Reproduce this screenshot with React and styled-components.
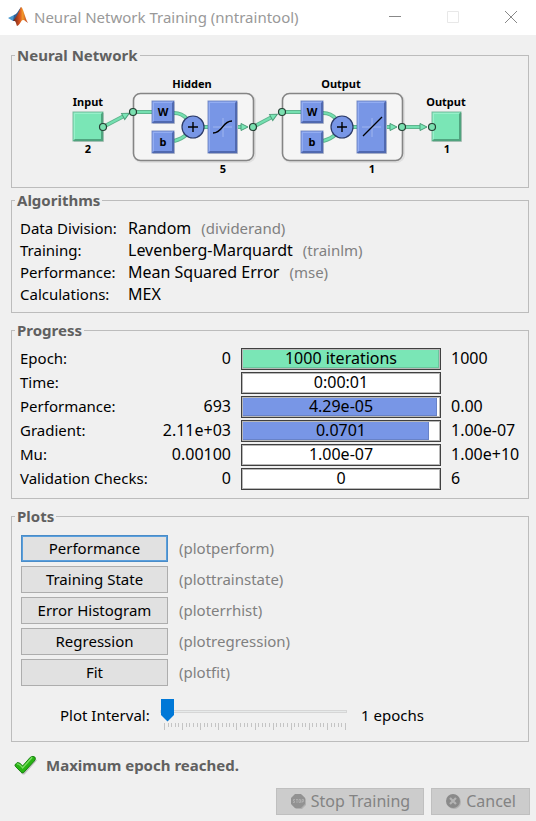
import React, { useState } from "react";
import styled, { createGlobalStyle, css } from "styled-components";

const GlobalStyle = createGlobalStyle`
  *, *::before, *::after { box-sizing: border-box; }
  html { background: #f0f0f0; }
  body {
    margin: 0;
    background: #f0f0f0;
    color: #000;
    font-family: "Noto Sans", "Open Sans", sans-serif;
    font-size: 15px;
    line-height: 22px;
  }
  button, input { font: inherit; }
`;

const Window = styled.div`
  display: flex;
  flex-direction: column;
  min-height: 100vh;
`;

const TitleBar = styled.header`
  display: flex;
  align-items: center;
  gap: 12px;
  height: 35px;
  padding: 0 2px 2px 8px;
  background: #fff;
  color: #999;
`;

const Title = styled.h1`
  display: flex;
  align-items: center;
  flex: 1;
  gap: 5px;
  margin: 0;
  font-size: 15px;
  font-weight: 400;
  line-height: 22px;
  white-space: nowrap;
`;

const CaptionButton = styled.button`
  display: grid;
  place-items: center;
  width: 46px;
  height: 33px;
  padding: 0;
  border: 0;
  background: transparent;
  color: #888;
  &:disabled { color: #e8e8e8; }
`;

const Main = styled.main`
  display: flex;
  flex-direction: column;
  padding: 9px 7px 0 11px;
`;

const Panel = styled.fieldset`
  min-width: 0;
  margin: 0 0 ${(p) => p.$gap || 0}px;
  padding: 0;
  border: 1px solid #bcbcbc;
`;

const Legend = styled.legend`
  margin-left: 3px;
  padding: 0 2px;
  color: #606060;
  font-weight: 700;
`;

const Diagram = styled.svg`
  display: block;
  margin: 0 auto;
  font-weight: 700;
  font-size: 11px;
  text-anchor: middle;
`;

const Facts = styled.dl`
  display: grid;
  grid-template-columns: 108px 1fr;
  margin: 0;
  padding: 6px 8px 7px;
`;

const Term = styled.dt`
  white-space: nowrap;
`;

const Value = styled.dd`
  display: flex;
  gap: 10px;
  margin: 0;
`;

const ValueText = styled.span`
  font-size: 16px;
`;

const Hint = styled.span`
  color: #808080;
`;

const ProgressList = styled.div`
  display: flex;
  flex-direction: column;
  gap: 2px;
  padding: 7px 8px 8px;
`;

const ProgressRow = styled.div`
  display: grid;
  grid-template-columns: 133px 78px minmax(120px, 200px) 1fr;
  column-gap: 0;
  height: 22px;
  line-height: 21px;
`;

const Start = styled.span`
  font-size: 16px;
  text-align: right;
`;

const Goal = styled.span`
  padding-left: 20px;
  font-size: 16px;
  white-space: nowrap;
`;

const Bar = styled.div`
  display: grid;
  height: 22px;
  margin-left: 10px;
  margin-right: -10px;
  border: 1px solid #404040;
  background: #fff;
  box-shadow: inset 0 0 0 1px #b8b8b8;
  > * { grid-area: 1 / 1; }
`;

const Fill = styled.div`
  margin: 1px;
  border: solid #0002;
  border-width: 0 1px 1px 0;
  background: ${(p) => (p.$tone === "green" ? "#7ae6b6" : "#7896e6")};
`;

const BarText = styled.span`
  font-size: 16px;
  line-height: 19px;
  text-align: center;
`;

const PlotList = styled.div`
  display: flex;
  flex-direction: column;
  gap: 4px;
  padding: 8px 9px 12px;
`;

const PlotRow = styled.div`
  display: flex;
  gap: 11px;
  height: 27px;
  line-height: 26px;
`;

const Button = styled.button`
  display: flex;
  align-items: center;
  justify-content: center;
  height: 27px;
  padding: 0 13px 1px;
  border: 1px solid #adadad;
  background: #e1e1e1;
  color: #000;
  line-height: 22px;
  white-space: nowrap;
  ${(p) => p.$wide && css`width: 147px; padding: 0 0 1px;`}
  ${(p) => p.$focused && css`border-color: #4a8cc8; box-shadow: inset 0 0 0 1px #5a9fdc;`}
  &:disabled {
    gap: 4px;
    border-color: #bfbfbf;
    background: #ccc;
    color: #838383;
    font-size: 16px;
  }
`;

const IntervalRow = styled.div`
  display: flex;
  align-items: flex-start;
  padding: 0 8px 11px 48px;
`;

const IntervalText = styled.label`
  width: ${(p) => p.$width}px;
  padding-top: 6px;
  white-space: nowrap;
`;

const SliderBox = styled.div`
  display: flex;
  flex-direction: column;
  width: 187px;
  margin: 1px 14px 0 0;
`;

const Slider = styled.input`
  width: 187px;
  height: 24px;
  margin: 0;
  appearance: none;
  background: transparent;
  outline: none;
  &::-webkit-slider-runnable-track {
    height: 3px;
    border: 1px solid #d6d6d6;
    background: #e7eaea;
  }
  &::-webkit-slider-thumb {
    appearance: none;
    width: 13px;
    height: 23px;
    margin-top: -12px;
    background: #0078d7;
    clip-path: polygon(0 0, 100% 0, 100% 72%, 50% 100%, 0 72%);
  }
`;

const Ticks = styled.svg`
  display: block;
`;

const Status = styled.p`
  display: flex;
  align-items: center;
  gap: 9px;
  margin: 0;
  padding: 12px 0 0 2px;
  color: #606060;
  font-weight: 700;
`;

const Actions = styled.footer`
  display: flex;
  justify-content: flex-end;
  gap: 7px;
  padding: 12px 6px 6px;
`;

function MatlabIcon() {
  return (
    <svg width="21" height="21" viewBox="0 0 21 21" aria-hidden="true">
      <defs>
        <linearGradient id="flame" x1="0" x2="1">
          <stop offset="0" stopColor="#5b1f1c" />
          <stop offset=".45" stopColor="#d9531e" />
          <stop offset=".65" stopColor="#f39a2b" />
          <stop offset="1" stopColor="#b3341f" />
        </linearGradient>
      </defs>
      <path d="M0 12 6 9 9 12 5 15Z" fill="#4a9ad0" />
      <path d="M6 9C9 8 10 5 13 1L12 9 8 15 5 15Z" fill="#2f5f94" />
      <path d="M13 1C11 5 10 9 5 15C8 14 8 18 9 20C12 19 13 14 15 14C17 14 18 16 20 17C17 12 15 1 13 1Z" fill="url(#flame)" />
    </svg>
  );
}

function Block({ x, y, w, h, color, light, dark }) {
  return (
    <g>
      <rect x={x + 1} y={y + 1} width={w} height={h} fill="#0002" />
      <rect x={x} y={y} width={w} height={h} fill={color} />
      <path d={`M${x} ${y}h${w}l-2 2h${4 - w}v${h - 4}l-2 2z`} fill={light} />
      <path d={`M${x + w} ${y + h}h${-w}l2-2h${w - 4}v${4 - h}l2-2z`} fill={dark} />
      <rect x={x} y={y} width={w} height={h} fill="none" stroke={dark} strokeOpacity=".7" />
    </g>
  );
}

const BLUE = { color: "#7896e6", light: "#93adf2", dark: "#5069b0" };
const GREEN = { color: "#7ae6b6", light: "#97f0ca", dark: "#50a47f" };

function Port({ x, y }) {
  return <circle cx={x} cy={y} r="3.5" fill="#7ae0b0" stroke="#253f34" strokeWidth="1.2" />;
}

function Link({ x1, y1, x2, y2, arrow = true }) {
  const angle = (Math.atan2(y2 - y1, x2 - x1) * 180) / Math.PI;
  const length = Math.hypot(x2 - x1, y2 - y1);
  return (
    <g transform={`translate(${x1} ${y1}) rotate(${angle})`}>
      <path d={`M0 0H${length}`} stroke="#5fb58e" strokeWidth="4" />
      <path d={`M0 0H${length}`} stroke="#74dfb0" strokeWidth="2" />
      {arrow && <path d={`M${length - 1} -3.5v7l7 -3.5z`} fill="#7ae6b6" stroke="#4c9b78" />}
    </g>
  );
}

function Layer({ x, name, size, curve }) {
  return (
    <g transform={`translate(${x} 0)`}>
      <rect x="1.5" y="24.5" width="120" height="67" rx="7" fill="none" stroke="#0001" strokeWidth="3" />
      <rect x="0.5" y="23.5" width="120" height="67" rx="7" fill="#f5f5f5" stroke="#858585" strokeWidth="1.6" />
      <Link x1={0} y1={42} x2={20} y2={42} arrow={false} />
      <path d="M41 43Q49 43 54 49M41 71Q49 69 54 64" fill="none" stroke="#5fb58e" strokeWidth="4" />
      <path d="M41 43Q49 43 54 49M41 71Q49 69 54 64" fill="none" stroke="#74dfb0" strokeWidth="2" />
      <Link x1={70} y1={57} x2={76} y2={57} arrow={false} />
      <Link x1={105} y1={57} x2={109} y2={57} />
      <Block x={19} y={31} w={22} h={22} {...BLUE} />
      <Block x={19} y={61} w={22} h={22} {...BLUE} />
      <Block x={75} y={31} w={29} h={52} {...BLUE} />
      <circle cx="60.5" cy="57.5" r="11" fill="#0002" />
      <circle cx="60" cy="57" r="11" fill="#7896e6" stroke="#2c3b69" strokeWidth="1.2" />
      <path d="M55 57h10M60 52v10" stroke="#000" strokeWidth="1.4" />
      <path d="M80 57h19M90 48v19" stroke="#9fb5ef" />
      <path d={curve} fill="none" stroke="#000" strokeWidth="1.3" />
      <text x="30" y="46">W</text>
      <text x="30" y="76">b</text>
      <text x="59" y="18">{name}</text>
      <text x="90" y="103">{size}</text>
    </g>
  );
}

function NetworkDiagram() {
  return (
    <Diagram width="420" height="121" viewBox="60 -4 420 121" role="img" aria-label="Network with 2 inputs, 5 hidden neurons and 1 output">
      <Layer x={133} name="Hidden" size="5" curve="M80 63C90 63 89 51 99 51" />
      <Layer x={282} name="Output" size="1" curve="M81 66 100 47" />
      <Link x1={103} y1={57} x2={124} y2={46} />
      <Link x1={253} y1={57} x2={272} y2={47} />
      <Link x1={402} y1={57} x2={421} y2={57} />
      <Block x={73} y={42} w={30} h={29} {...GREEN} />
      <Block x={432} y={42} w={29} h={29} {...GREEN} />
      <Port x={103} y={57} />
      <Port x={133} y={42} />
      <Port x={253} y={57} />
      <Port x={282} y={42} />
      <Port x={402} y={57} />
      <Port x={432} y={57} />
      <text x="88" y="36">Input</text>
      <text x="88" y="83">2</text>
      <text x="446" y="36">Output</text>
      <text x="447" y="83">1</text>
    </Diagram>
  );
}

function CheckIcon() {
  return (
    <svg width="24" height="22" viewBox="0 0 25 22" aria-hidden="true">
      <path d="M2 12 6 8 10 12 20 2 24 5 11 20 9 20Z" transform="translate(1 1)" fill="#0003" />
      <path d="M2 11Q4 7 7 9L10 12 18 3Q21 1 23 3 24 5 22 7L11 19Q9 20 8 18L3 13Q2 12 2 11Z" fill="#28b414" stroke="#178010" />
      <path d="M4 10Q6 9 10 14L20 3" fill="none" stroke="#79dd62" strokeWidth="1.5" />
    </svg>
  );
}

function StopIcon() {
  return (
    <svg width="17" height="17" viewBox="0 0 17 17" aria-hidden="true">
      <path d="M6 2h6l4 4v6l-4 4H6l-4-4V6Z" fill="#0002" />
      <path d="M5 1h6l4 4v6l-4 4H5l-4-4V5Z" fill="#929292" />
      <path d="M5 6.5H3.5v1.500h1v1.500H3M6 6.500h2M7 6.500v3.500M9 6.500h1.500v3H9ZM12 10V6.500h1.500v2h-1.500" fill="none" stroke="#b4b4b4" strokeWidth=".8" />
    </svg>
  );
}

function CancelIcon() {
  return (
    <svg width="17" height="17" viewBox="0 0 17 17" aria-hidden="true">
      <circle cx="9" cy="9" r="7" fill="#0002" />
      <circle cx="8" cy="8" r="7" fill="#8a8a8a" />
      <path d="m5 5 6 6M11 5l-6 6" stroke="#b4b4b4" strokeWidth="2.2" />
    </svg>
  );
}

const FACTS = [
  ["Data Division:", "Random", "(dividerand)"],
  ["Training:", "Levenberg-Marquardt", "(trainlm)"],
  ["Performance:", "Mean Squared Error", "(mse)"],
  ["Calculations:", "MEX"],
];

const PROGRESS = [
  { label: "Epoch:", start: "0", text: "1000 iterations", goal: "1000", done: 100, tone: "green" },
  { label: "Time:", start: "", text: "0:00:01", goal: "", done: 0 },
  { label: "Performance:", start: "693", text: "4.29e-05", goal: "0.00", done: 99, tone: "blue" },
  { label: "Gradient:", start: "2.11e+03", text: "0.0701", goal: "1.00e-07", done: 95, tone: "blue" },
  { label: "Mu:", start: "0.00100", text: "1.00e-07", goal: "1.00e+10", done: 0 },
  { label: "Validation Checks:", start: "0", text: "0", goal: "6", done: 0 },
];

const PLOTS = [
  ["Performance", "(plotperform)"],
  ["Training State", "(plottrainstate)"],
  ["Error Histogram", "(ploterrhist)"],
  ["Regression", "(plotregression)"],
  ["Fit", "(plotfit)"],
];

const TICKS = Array.from({ length: 51 }, (_, i) => {
  const x = Math.round(4 + i * 3.62) + 0.5;
  return `M${x} 0v${i % 5 === 0 ? 7 : 4}`;
}).join("");

export default function App() {
  const [interval, setInterval] = useState(1);
  return (
    <Window>
      <GlobalStyle />
      <TitleBar>
        <Title><MatlabIcon />Neural Network Training (nntraintool)</Title>
        <CaptionButton aria-label="Minimize">
          <svg width="12" height="12"><path d="M0 5.5h12" stroke="currentColor" /></svg>
        </CaptionButton>
        <CaptionButton aria-label="Maximize" disabled>
          <svg width="12" height="12"><path d="M.5.5h11v11H.5Z" fill="none" stroke="currentColor" /></svg>
        </CaptionButton>
        <CaptionButton aria-label="Close">
          <svg width="12" height="12"><path d="m0 0 12 12M12 0 0 12" stroke="currentColor" /></svg>
        </CaptionButton>
      </TitleBar>
      <Main>
        <Panel $gap={1}>
          <Legend>Neural Network</Legend>
          <NetworkDiagram />
        </Panel>
        <Panel $gap={6}>
          <Legend>Algorithms</Legend>
          <Facts>
            {FACTS.map(([term, value, hint]) => (
              <React.Fragment key={term}>
                <Term>{term}</Term>
                <Value>
                  <ValueText>{value}</ValueText>
                  {hint && <Hint>{hint}</Hint>}
                </Value>
              </React.Fragment>
            ))}
          </Facts>
        </Panel>
        <Panel $gap={6}>
          <Legend>Progress</Legend>
          <ProgressList>
            {PROGRESS.map((row) => (
              <ProgressRow key={row.label}>
                <span>{row.label}</span>
                <Start>{row.start}</Start>
                <Bar role="progressbar" aria-label={row.label} aria-valuenow={row.done} aria-valuetext={row.text}>
                  {row.done > 0 && <Fill $tone={row.tone} style={{ width: `calc(${row.done}% - 2px)` }} />}
                  <BarText>{row.text}</BarText>
                </Bar>
                <Goal>{row.goal}</Goal>
              </ProgressRow>
            ))}
          </ProgressList>
        </Panel>
        <Panel>
          <Legend>Plots</Legend>
          <PlotList>
            {PLOTS.map(([name, hint], i) => (
              <PlotRow key={name}>
                <Button type="button" $wide $focused={i === 0}>{name}</Button>
                <Hint>{hint}</Hint>
              </PlotRow>
            ))}
          </PlotList>
          <IntervalRow>
            <IntervalText htmlFor="interval" $width={100}>Plot Interval:</IntervalText>
            <SliderBox>
              <Slider id="interval" type="range" min="1" max="51" value={interval} onChange={(e) => setInterval(Number(e.target.value))} />
              <Ticks width="187" height="7" aria-hidden="true"><path d={TICKS} stroke="#c4c4c4" /></Ticks>
            </SliderBox>
            <IntervalText as="output" htmlFor="interval" $width={80}>{interval} epochs</IntervalText>
          </IntervalRow>
        </Panel>
        <Status>
          <CheckIcon />
          Maximum epoch reached.
        </Status>
      </Main>
      <Actions>
        <Button type="button" disabled><StopIcon />Stop Training</Button>
        <Button type="button" disabled><CancelIcon />Cancel</Button>
      </Actions>
    </Window>
  );
}
